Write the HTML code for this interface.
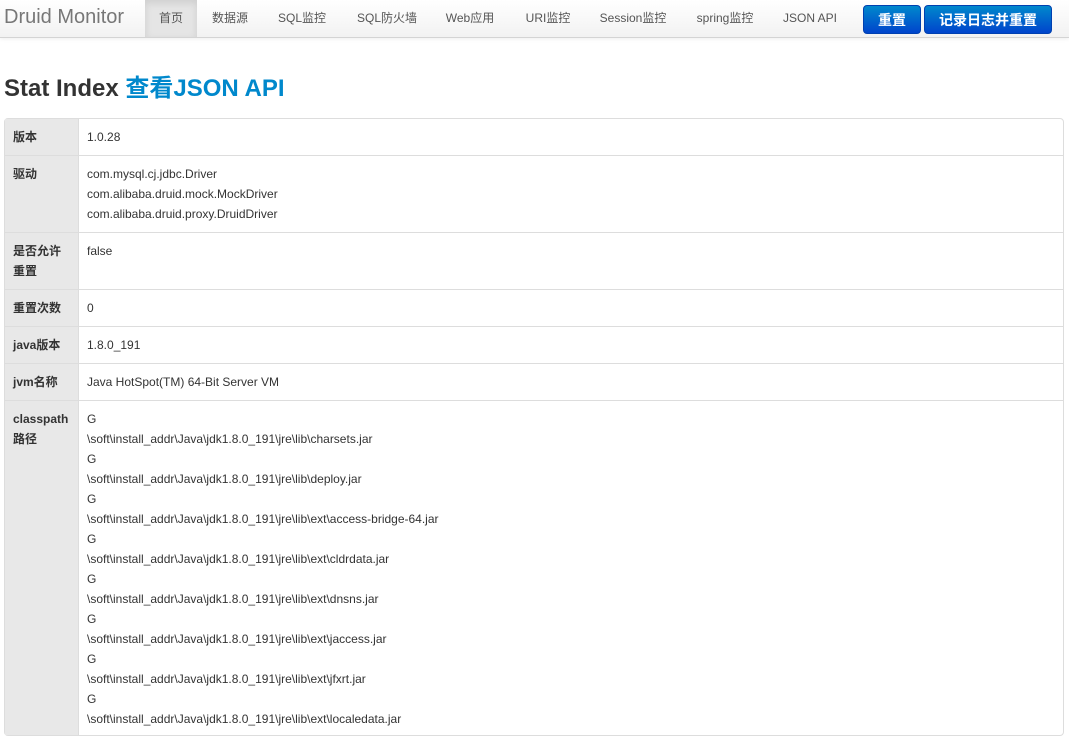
<!DOCTYPE html>
<html><head><meta charset="utf-8"><style>
*{margin:0;padding:0;box-sizing:border-box}
body{width:1069px;height:689px;overflow:hidden;background:#fff;font-family:"Liberation Sans","Noto Sans CJK SC",sans-serif;font-size:12px;color:#333}
.nav{position:absolute;left:0;top:0;width:1069px;height:38px;background:linear-gradient(#fff,#f2f2f2);border-bottom:1px solid #d4d4d4;box-shadow:0 1px 4px rgba(0,0,0,.07)}
.brand{position:absolute;left:4px;top:6px;font-size:20px;color:#777}
.ni{position:absolute;top:0;height:37px;line-height:36px;font-size:12px;color:#555;transform:translateX(-50%);white-space:nowrap}
.act{position:absolute;left:145px;top:0;width:52px;height:37px;background:#e5e5e5;box-shadow:inset 0 3px 8px rgba(0,0,0,.1)}
.btn{position:absolute;top:5px;height:29px;line-height:29px;text-align:center;color:#fff;font-size:14px;font-weight:bold;background:linear-gradient(#0088cc,#0044cc);border:1px solid #0040b0;border-radius:4px}
h1{position:absolute;left:4px;top:74px;font-size:24px;line-height:30px;font-weight:bold;color:#333}
h1 span{color:#0088cc}
table{position:absolute;left:4px;top:118px;width:1060px;border-collapse:separate;border-spacing:0;border:1px solid #ddd;border-radius:4px}
td{border-top:1px solid #ddd;padding:8px 8px 6px;line-height:20px;vertical-align:top;font-size:12px}
tr:first-child td{border-top:none}
td.l{width:73px;background:#e8e8e8;font-weight:bold;color:#333}
td.v{border-left:1px solid #ddd}
</style></head><body>
<div class="nav">
<div class="brand">Druid Monitor</div>
<div class="act"></div>
<div class="ni" style="left:171px">首页</div>
<div class="ni" style="left:230px">数据源</div>
<div class="ni" style="left:302px">SQL监控</div>
<div class="ni" style="left:387px">SQL防火墙</div>
<div class="ni" style="left:470px">Web应用</div>
<div class="ni" style="left:548px">URI监控</div>
<div class="ni" style="left:633px">Session监控</div>
<div class="ni" style="left:725px">spring监控</div>
<div class="ni" style="left:810px">JSON API</div>
<div class="btn" style="left:863px;width:58px">重置</div>
<div class="btn" style="left:924px;width:128px">记录日志并重置</div>
</div>
<h1>Stat Index <span>查看JSON API</span></h1>
<table>
<tr style="height:36px"><td class="l">版本</td><td class="v">1.0.28</td></tr>
<tr style="height:77px"><td class="l">驱动</td><td class="v">com.mysql.cj.jdbc.Driver<br>com.alibaba.druid.mock.MockDriver<br>com.alibaba.druid.proxy.DruidDriver</td></tr>
<tr style="height:57px"><td class="l">是否允许重置</td><td class="v">false</td></tr>
<tr style="height:37px"><td class="l">重置次数</td><td class="v">0</td></tr>
<tr style="height:37px"><td class="l">java版本</td><td class="v">1.8.0_191</td></tr>
<tr style="height:37px"><td class="l">jvm名称</td><td class="v">Java HotSpot(TM) 64-Bit Server VM</td></tr>
<tr><td class="l">classpath路径</td><td class="v">G<br>\soft\install_addr\Java\jdk1.8.0_191\jre\lib\charsets.jar<br>G<br>\soft\install_addr\Java\jdk1.8.0_191\jre\lib\deploy.jar<br>G<br>\soft\install_addr\Java\jdk1.8.0_191\jre\lib\ext\access-bridge-64.jar<br>G<br>\soft\install_addr\Java\jdk1.8.0_191\jre\lib\ext\cldrdata.jar<br>G<br>\soft\install_addr\Java\jdk1.8.0_191\jre\lib\ext\dnsns.jar<br>G<br>\soft\install_addr\Java\jdk1.8.0_191\jre\lib\ext\jaccess.jar<br>G<br>\soft\install_addr\Java\jdk1.8.0_191\jre\lib\ext\jfxrt.jar<br>G<br>\soft\install_addr\Java\jdk1.8.0_191\jre\lib\ext\localedata.jar</td></tr>
</table>
</body></html>
